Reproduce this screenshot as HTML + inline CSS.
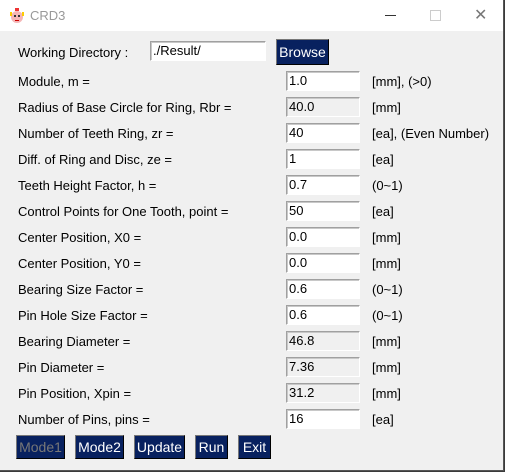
<!DOCTYPE html><html><head><style>
body{margin:0;width:505px;height:472px;background:#3a3a3a;font-family:"Liberation Sans",sans-serif;font-size:13px;color:#000;position:relative;overflow:hidden}
.win{position:absolute;left:0;top:0;width:503px;height:470px;background:#f0f0f0;border-right:1px solid #555;border-bottom:1px solid #555}
.tb{position:absolute;left:0;top:0;width:503px;height:31px;background:#fff}
.a{position:absolute;white-space:nowrap}
.e{position:absolute;left:286px;width:70px;height:18px;border:1px solid #a0a0a0;border-right-color:#fff;border-bottom-color:#fff;background:#fff;padding-left:2px;line-height:18px;box-shadow:inset 1px 1px 0 #c8c8c8}
.e.r{background:#f0f0f0}
.b{position:absolute;height:24px;background:#08215f;color:#fff;border:1px solid #000;border-top-color:#777;border-left-color:#777;box-sizing:border-box;text-align:center;line-height:22px;font-size:14px}
</style></head><body><div class="win">
<div class="tb">
<svg class="a" style="left:8px;top:6px" width="18" height="18"><circle cx="9" cy="11" r="6" fill="#f4b6b6"/><rect x="7" y="2" width="4" height="3" fill="#e33"/><rect x="2" y="6" width="2" height="4" fill="#fc0"/><rect x="14" y="6" width="2" height="4" fill="#fc0"/><rect x="6" y="9" width="2" height="2" fill="#333"/><rect x="10" y="9" width="2" height="2" fill="#333"/><rect x="7" y="14" width="4" height="1" fill="#c00"/></svg>
<div class="a" style="left:30px;top:8px;color:#999;font-size:13px">CRD3</div>
<div class="a" style="left:385px;top:15px;width:11px;height:1px;background:#333"></div>
<div class="a" style="left:430px;top:10px;width:9px;height:9px;border:1px solid #ccc"></div>
<div class="a" style="left:474px;top:5px;color:#777;font-size:16px">✕</div>
</div>
<div class="a" style="left:18px;top:45px">Working Directory :</div>
<div class="e" style="left:150px;top:41px;width:112px">./Result/</div>
<div class="b" style="left:276px;top:39px;width:53px;height:26px;line-height:24px">Browse</div>

<div class="a" style="left:18px;top:74px">Module, m =</div><div class="e" style="top:71px">1.0</div><div class="a" style="left:372px;top:74px">[mm], (&gt;0)</div>
<div class="a" style="left:18px;top:100px">Radius of Base Circle for Ring, Rbr =</div><div class="e r" style="top:97px">40.0</div><div class="a" style="left:372px;top:100px">[mm]</div>
<div class="a" style="left:18px;top:126px">Number of Teeth Ring, zr =</div><div class="e" style="top:123px">40</div><div class="a" style="left:372px;top:126px">[ea], (Even Number)</div>
<div class="a" style="left:18px;top:152px">Diff. of Ring and Disc, ze =</div><div class="e" style="top:149px">1</div><div class="a" style="left:372px;top:152px">[ea]</div>
<div class="a" style="left:18px;top:178px">Teeth Height Factor, h =</div><div class="e" style="top:175px">0.7</div><div class="a" style="left:372px;top:178px">(0~1)</div>
<div class="a" style="left:18px;top:204px">Control Points for One Tooth, point =</div><div class="e" style="top:201px">50</div><div class="a" style="left:372px;top:204px">[ea]</div>
<div class="a" style="left:18px;top:230px">Center Position, X0 =</div><div class="e" style="top:227px">0.0</div><div class="a" style="left:372px;top:230px">[mm]</div>
<div class="a" style="left:18px;top:256px">Center Position, Y0 =</div><div class="e" style="top:253px">0.0</div><div class="a" style="left:372px;top:256px">[mm]</div>
<div class="a" style="left:18px;top:282px">Bearing Size Factor =</div><div class="e" style="top:279px">0.6</div><div class="a" style="left:372px;top:282px">(0~1)</div>
<div class="a" style="left:18px;top:308px">Pin Hole Size Factor =</div><div class="e" style="top:305px">0.6</div><div class="a" style="left:372px;top:308px">(0~1)</div>
<div class="a" style="left:18px;top:334px">Bearing Diameter =</div><div class="e r" style="top:331px">46.8</div><div class="a" style="left:372px;top:334px">[mm]</div>
<div class="a" style="left:18px;top:360px">Pin Diameter =</div><div class="e r" style="top:357px">7.36</div><div class="a" style="left:372px;top:360px">[mm]</div>
<div class="a" style="left:18px;top:386px">Pin Position, Xpin =</div><div class="e r" style="top:383px">31.2</div><div class="a" style="left:372px;top:386px">[mm]</div>
<div class="a" style="left:18px;top:412px">Number of Pins, pins =</div><div class="e" style="top:409px">16</div><div class="a" style="left:372px;top:412px">[ea]</div>

<div class="b" style="left:16px;top:435px;width:49px;color:#777">Mode1</div>
<div class="b" style="left:75px;top:435px;width:49px">Mode2</div>
<div class="b" style="left:134px;top:435px;width:51px">Update</div>
<div class="b" style="left:195px;top:435px;width:33px">Run</div>
<div class="b" style="left:238px;top:435px;width:33px">Exit</div>
</div></body></html>
